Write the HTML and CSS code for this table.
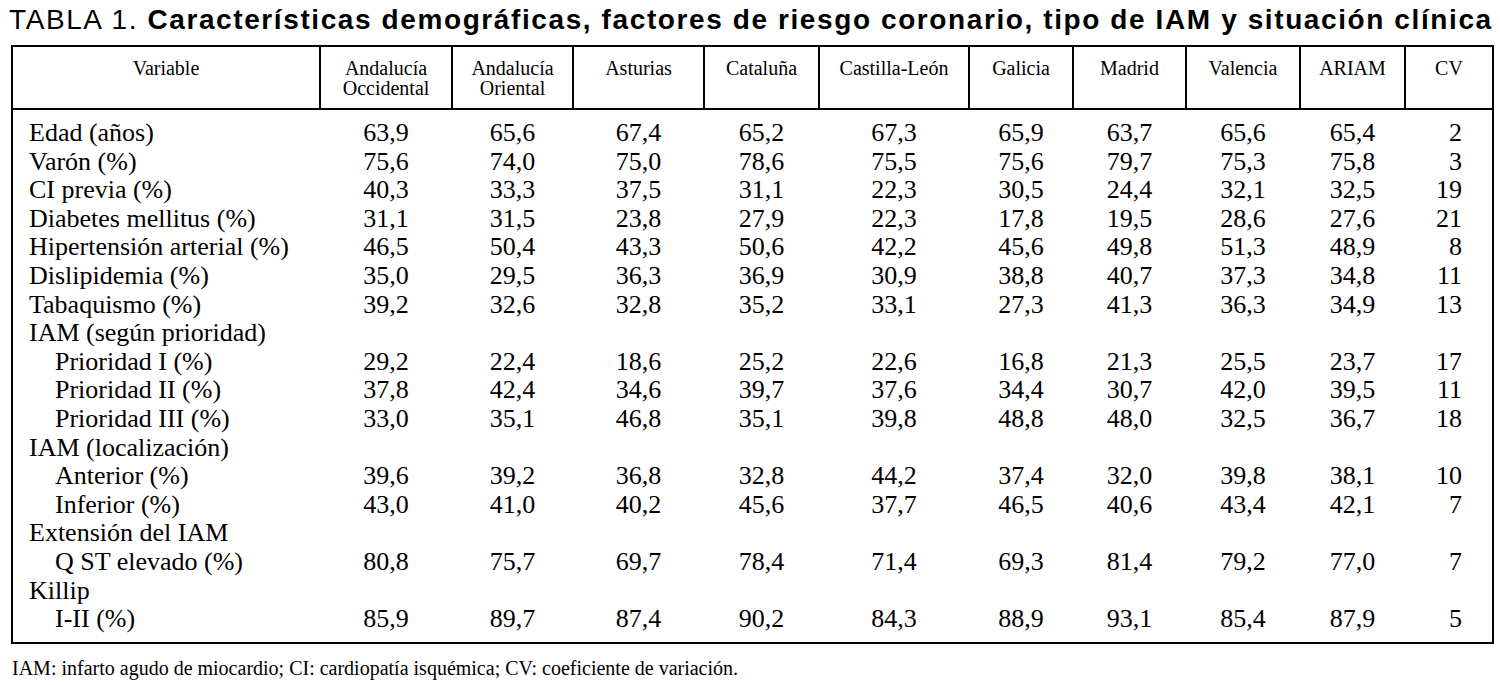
FILE: index.html
```html
<!DOCTYPE html>
<html lang="es">
<head>
<meta charset="utf-8">
<title>Tabla 1</title>
<link rel="stylesheet" href="styles.css">
</head>
<body>
<div class="page">
  <h1 class="title"><span class="title-label">TABLA 1.</span> <span class="title-text">Características demográficas, factores de riesgo coronario, tipo de IAM y situación clínica</span></h1>
  <table class="data">
    <colgroup>
      <col class="c-var"><col class="c-ao"><col class="c-aor"><col class="c-ast"><col class="c-cat"><col class="c-cyl"><col class="c-gal"><col class="c-mad"><col class="c-val"><col class="c-ariam"><col class="c-cv">
    </colgroup>
    <thead>
      <tr>
        <th>Variable</th>
        <th>Andalucía<br>Occidental</th>
        <th>Andalucía<br>Oriental</th>
        <th>Asturias</th>
        <th>Cataluña</th>
        <th>Castilla-León</th>
        <th>Galicia</th>
        <th>Madrid</th>
        <th>Valencia</th>
        <th>ARIAM</th>
        <th>CV</th>
      </tr>
    </thead>
    <tbody>
      <tr class="first"><td class="lbl">Edad (años)</td><td>63,9</td><td>65,6</td><td>67,4</td><td>65,2</td><td>67,3</td><td>65,9</td><td>63,7</td><td>65,6</td><td>65,4</td><td class="cv">2</td></tr>
      <tr><td class="lbl">Varón (%)</td><td>75,6</td><td>74,0</td><td>75,0</td><td>78,6</td><td>75,5</td><td>75,6</td><td>79,7</td><td>75,3</td><td>75,8</td><td class="cv">3</td></tr>
      <tr><td class="lbl">CI previa (%)</td><td>40,3</td><td>33,3</td><td>37,5</td><td>31,1</td><td>22,3</td><td>30,5</td><td>24,4</td><td>32,1</td><td>32,5</td><td class="cv">19</td></tr>
      <tr><td class="lbl">Diabetes mellitus (%)</td><td>31,1</td><td>31,5</td><td>23,8</td><td>27,9</td><td>22,3</td><td>17,8</td><td>19,5</td><td>28,6</td><td>27,6</td><td class="cv">21</td></tr>
      <tr><td class="lbl">Hipertensión arterial (%)</td><td>46,5</td><td>50,4</td><td>43,3</td><td>50,6</td><td>42,2</td><td>45,6</td><td>49,8</td><td>51,3</td><td>48,9</td><td class="cv">8</td></tr>
      <tr><td class="lbl">Dislipidemia (%)</td><td>35,0</td><td>29,5</td><td>36,3</td><td>36,9</td><td>30,9</td><td>38,8</td><td>40,7</td><td>37,3</td><td>34,8</td><td class="cv">11</td></tr>
      <tr><td class="lbl">Tabaquismo (%)</td><td>39,2</td><td>32,6</td><td>32,8</td><td>35,2</td><td>33,1</td><td>27,3</td><td>41,3</td><td>36,3</td><td>34,9</td><td class="cv">13</td></tr>
      <tr><td class="lbl" colspan="11">IAM (según prioridad)</td></tr>
      <tr><td class="lbl sub">Prioridad I (%)</td><td>29,2</td><td>22,4</td><td>18,6</td><td>25,2</td><td>22,6</td><td>16,8</td><td>21,3</td><td>25,5</td><td>23,7</td><td class="cv">17</td></tr>
      <tr><td class="lbl sub">Prioridad II (%)</td><td>37,8</td><td>42,4</td><td>34,6</td><td>39,7</td><td>37,6</td><td>34,4</td><td>30,7</td><td>42,0</td><td>39,5</td><td class="cv">11</td></tr>
      <tr><td class="lbl sub">Prioridad III (%)</td><td>33,0</td><td>35,1</td><td>46,8</td><td>35,1</td><td>39,8</td><td>48,8</td><td>48,0</td><td>32,5</td><td>36,7</td><td class="cv">18</td></tr>
      <tr><td class="lbl" colspan="11">IAM (localización)</td></tr>
      <tr><td class="lbl sub">Anterior (%)</td><td>39,6</td><td>39,2</td><td>36,8</td><td>32,8</td><td>44,2</td><td>37,4</td><td>32,0</td><td>39,8</td><td>38,1</td><td class="cv">10</td></tr>
      <tr><td class="lbl sub">Inferior (%)</td><td>43,0</td><td>41,0</td><td>40,2</td><td>45,6</td><td>37,7</td><td>46,5</td><td>40,6</td><td>43,4</td><td>42,1</td><td class="cv">7</td></tr>
      <tr><td class="lbl" colspan="11">Extensión del IAM</td></tr>
      <tr><td class="lbl sub">Q ST elevado (%)</td><td>80,8</td><td>75,7</td><td>69,7</td><td>78,4</td><td>71,4</td><td>69,3</td><td>81,4</td><td>79,2</td><td>77,0</td><td class="cv">7</td></tr>
      <tr><td class="lbl" colspan="11">Killip</td></tr>
      <tr class="last"><td class="lbl sub">I-II (%)</td><td>85,9</td><td>89,7</td><td>87,4</td><td>90,2</td><td>84,3</td><td>88,9</td><td>93,1</td><td>85,4</td><td>87,9</td><td class="cv">5</td></tr>
    </tbody>
  </table>
  <p class="note">IAM: infarto agudo de miocardio; CI: cardiopatía isquémica; CV: coeficiente de variación.</p>
</div>
</body>
</html>
```
FILE: styles.css
```css
html, body {
  margin: 0;
  padding: 0;
  background: #fff;
  color: #000;
}

.page {
  padding-top: 4px;
}

.title {
  margin: 0;
  padding-left: 9px;
  font-family: "Liberation Sans", Arial, sans-serif;
  font-size: 28px;
  line-height: 32px;
  letter-spacing: 1.6px;
  white-space: nowrap;
}

.title-label {
  font-weight: normal;
}

.title-text {
  font-weight: bold;
}

.data {
  margin: 9px 0 0 11px;
  width: 1483px;
  table-layout: fixed;
  border-collapse: collapse;
  border: 2px solid #000;
  font-family: "Liberation Serif", "Times New Roman", serif;
}

.c-var { width: 308px; }
.c-ao { width: 132px; }
.c-aor { width: 121px; }
.c-ast { width: 131px; }
.c-cat { width: 115px; }
.c-cyl { width: 150px; }
.c-gal { width: 104px; }
.c-mad { width: 113px; }
.c-val { width: 114px; }
.c-ariam { width: 105px; }
.c-cv { width: 88px; }

.data th {
  font-weight: normal;
  font-size: 20px;
  line-height: 20px;
  vertical-align: top;
  text-align: center;
  padding: 11px 2px 10px;
  border: 2px solid #000;
}

.data td {
  font-size: 26px;
  line-height: 28.6px;
  padding: 0;
  text-align: center;
  white-space: nowrap;
}

.data td.lbl {
  text-align: left;
  padding-left: 16px;
}

.data td.lbl.sub {
  padding-left: 42px;
}

.data td.cv {
  text-align: right;
  padding-right: 30px;
}

.data tr.first td {
  padding-top: 9px;
}

.data tr.last td {
  padding-bottom: 8px;
}

.note {
  margin: 12px 0 0 12px;
  font-family: "Liberation Serif", "Times New Roman", serif;
  font-size: 20px;
  line-height: 24px;
}
```
